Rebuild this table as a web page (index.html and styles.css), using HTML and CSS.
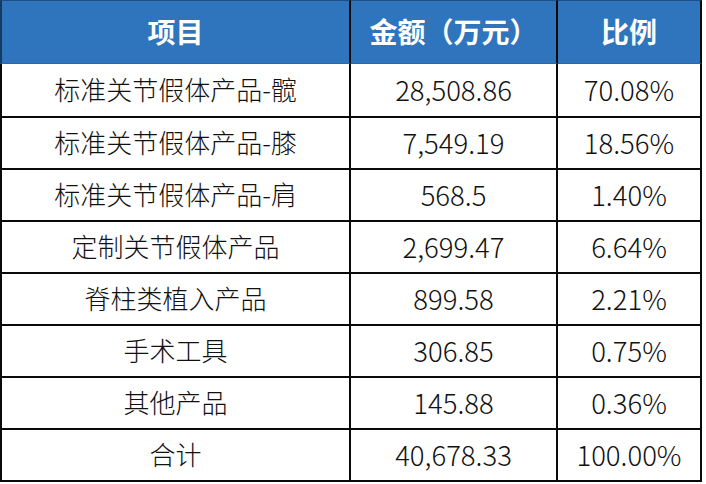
FILE: index.html
```html
<!DOCTYPE html>
<html lang="zh-CN">
<head>
<meta charset="utf-8">
<link rel="stylesheet" href="styles.css">
</head>
<body>
<div class="sheet">
  <div class="cell head first">项目</div>
  <div class="cell head">金额（万元）</div>
  <div class="cell head">比例</div>

  <div class="cell first r1">标准关节假体产品-髋</div>
  <div class="cell num r1">28,508.86</div>
  <div class="cell num r1">70.08%</div>

  <div class="cell first">标准关节假体产品-膝</div>
  <div class="cell num">7,549.19</div>
  <div class="cell num">18.56%</div>

  <div class="cell first">标准关节假体产品-肩</div>
  <div class="cell num">568.5</div>
  <div class="cell num">1.40%</div>

  <div class="cell first">定制关节假体产品</div>
  <div class="cell num">2,699.47</div>
  <div class="cell num">6.64%</div>

  <div class="cell first">脊柱类植入产品</div>
  <div class="cell num">899.58</div>
  <div class="cell num">2.21%</div>

  <div class="cell first">手术工具</div>
  <div class="cell num">306.85</div>
  <div class="cell num">0.75%</div>

  <div class="cell first">其他产品</div>
  <div class="cell num">145.88</div>
  <div class="cell num">0.36%</div>

  <div class="cell first">合计</div>
  <div class="cell num">40,678.33</div>
  <div class="cell num">100.00%</div>
</div>
</body>
</html>
```
FILE: styles.css
```css
html, body {
  margin: 0;
  padding: 0;
  background: #ffffff;
}
.sheet {
  display: grid;
  grid-template-columns: 351px 207px 144px;
  grid-template-rows: 64px 54px repeat(7, 52px);
  font-family: "Noto Sans CJK SC", "Noto Sans", sans-serif;
  color: #111111;
}
.cell {
  box-sizing: border-box;
  display: flex;
  align-items: center;
  justify-content: center;
  padding-bottom: 3px;
  border-right: 2px solid #0a0a0a;
  border-bottom: 2px solid #0a0a0a;
  font-size: 26px;
  font-weight: 300;
  white-space: nowrap;
  background: #ffffff;
}
.first {
  border-left: 2px solid #0a0a0a;
}
.head {
  background: #2f75bd;
  color: #ffffff;
  font-weight: 700;
  font-size: 28px;
  border-top: 1px solid #1d4f85;
  border-bottom: 1px solid #2a68a8;
}
.head.first {
  border-left: 2px solid #163a63;
}
.num {
  font-size: 27.5px;
}
```
